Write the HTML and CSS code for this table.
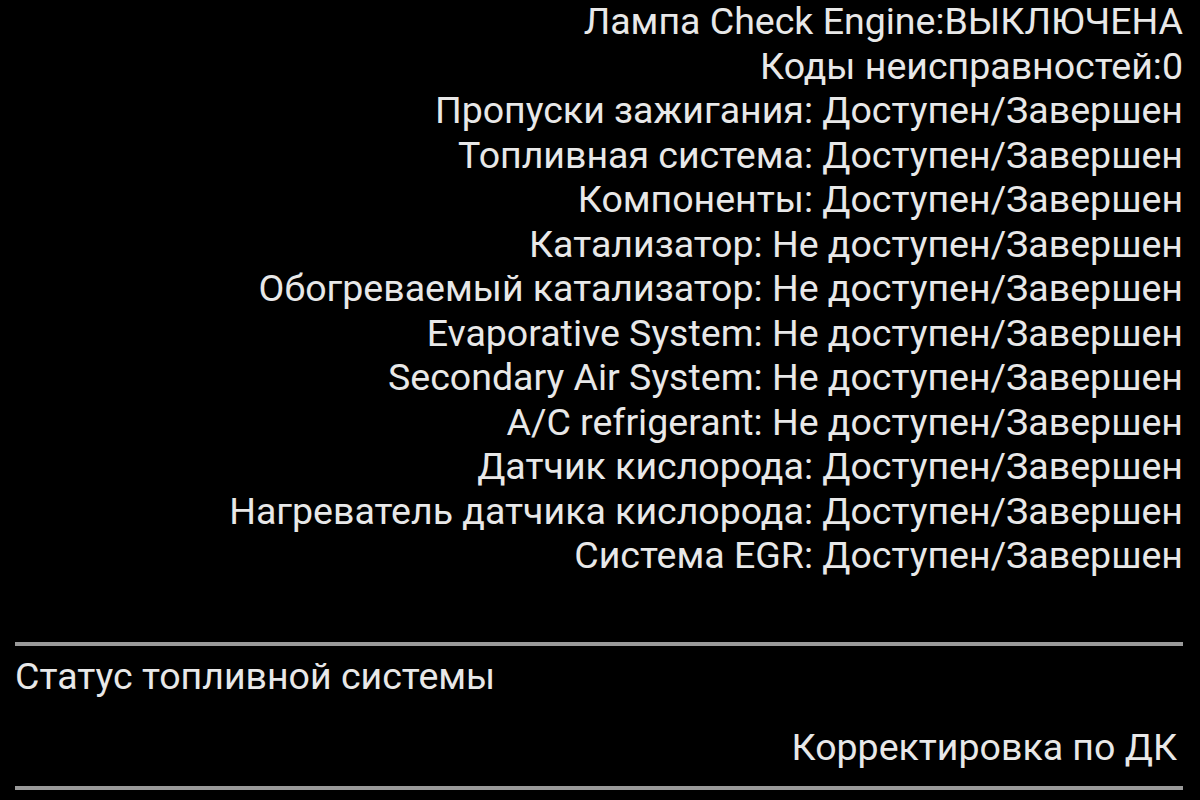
FILE: index.html
```html
<!DOCTYPE html>
<html lang="ru">
<head>
<meta charset="utf-8">
<link rel="stylesheet" href="styles.css">
</head>
<body>
<div class="status">
  <div class="line">Лампа Check Engine:ВЫКЛЮЧЕНА</div>
  <div class="line">Коды неисправностей:0</div>
  <div class="line">Пропуски зажигания: Доступен/Завершен</div>
  <div class="line">Топливная система: Доступен/Завершен</div>
  <div class="line">Компоненты: Доступен/Завершен</div>
  <div class="line">Катализатор: Не доступен/Завершен</div>
  <div class="line">Обогреваемый катализатор: Не доступен/Завершен</div>
  <div class="line">Evaporative System: Не доступен/Завершен</div>
  <div class="line">Secondary Air System: Не доступен/Завершен</div>
  <div class="line">A/C refrigerant: Не доступен/Завершен</div>
  <div class="line">Датчик кислорода: Доступен/Завершен</div>
  <div class="line">Нагреватель датчика кислорода: Доступен/Завершен</div>
  <div class="line">Система EGR: Доступен/Завершен</div>
</div>
<div class="section">
  <div class="divider"></div>
  <div class="title">Статус топливной системы</div>
  <div class="value">Корректировка по ДК</div>
  <div class="divider"></div>
</div>
</body>
</html>
```
FILE: styles.css
```css
html, body {
  margin: 0;
  padding: 0;
  background: #000;
}
body {
  width: 1200px;
  height: 800px;
  overflow: hidden;
  font-family: Roboto, "Noto Sans", sans-serif;
  color: #e8e8e8;
  font-size: 37.5px;
}
.status {
  margin-top: -1px;
  padding-right: 17px;
  text-align: right;
}
.line {
  line-height: 44.5px;
  white-space: nowrap;
}
.section {
  margin-top: 64.5px;
  padding: 0 17px 0 15px;
}
.divider {
  height: 4px;
  background: #9a9a9a;
}
.title {
  line-height: 44.5px;
  padding: 7.5px 0 0 0;
}
.value {
  text-align: right;
  line-height: 44.5px;
  padding: 26.5px 6px 17px 0;
}
```
